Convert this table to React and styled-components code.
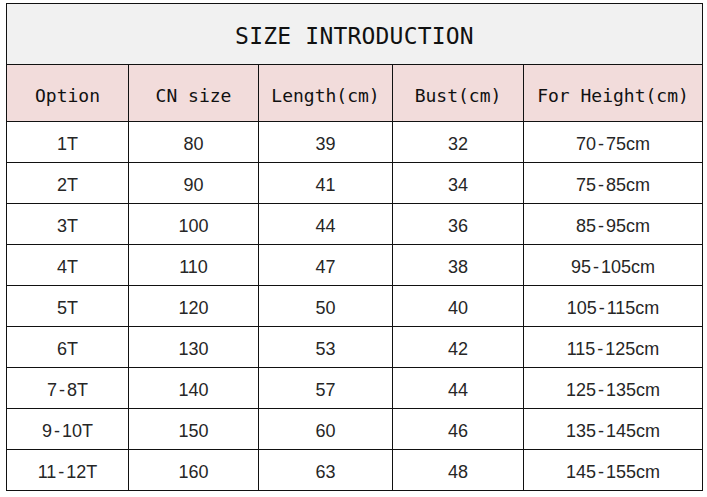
import React from "react";
import styled, { createGlobalStyle } from "styled-components";

const Global = createGlobalStyle`
  html, body { margin: 0; padding: 0; background: #ffffff; }
  body { font-family: "Liberation Sans", Arial, sans-serif; }
`;

const Page = styled.div`
  width: 707px;
  height: 497px;
  box-sizing: border-box;
  padding: 3px 0 0 6px;
  background: #ffffff;
`;

const Table = styled.div`
  display: grid;
  grid-template-columns: 122px 130px 134px 131px 179px;
  grid-template-rows: 61px 57px repeat(9, 41px);
  border-top: 1.5px solid #111;
  border-left: 1.5px solid #111;
  width: max-content;
`;

const Cell = styled.div`
  box-sizing: border-box;
  display: flex;
  align-items: center;
  justify-content: center;
  border-right: ${(p) => (p.$last ? "1.5px" : "1px")} solid #111;
  border-bottom: ${(p) => (p.$bottom ? "1.5px" : "1px")} solid #111;
  white-space: nowrap;
`;

const TitleCell = styled(Cell)`
  grid-column: 1 / -1;
  background: #f1f1f1;
  font-family: "DejaVu Sans Mono", "Liberation Mono", monospace;
  font-size: 23px;
  color: #111;
  padding-top: 4px;
  letter-spacing: 0.2px;
  border-right: 1.5px solid #111;
`;

const HeadCell = styled(Cell)`
  background: #f2dcdb;
  font-family: "DejaVu Sans Mono", "Liberation Mono", monospace;
  font-size: 18px;
  color: #111;
  padding-top: 4px;
`;

const DataCell = styled(Cell)`
  background: #ffffff;
  font-family: "Liberation Sans", Arial, sans-serif;
  font-size: 18px;
  color: #262626;
  padding-top: 5px;
`;

const Dash = styled.span`
  margin: 0 2px;
`;

const headers = ["Option", "CN size", "Length(cm)", "Bust(cm)", "For Height(cm)"];

const rows = [
  ["1T", "80", "39", "32", "70-75cm"],
  ["2T", "90", "41", "34", "75-85cm"],
  ["3T", "100", "44", "36", "85-95cm"],
  ["4T", "110", "47", "38", "95-105cm"],
  ["5T", "120", "50", "40", "105-115cm"],
  ["6T", "130", "53", "42", "115-125cm"],
  ["7-8T", "140", "57", "44", "125-135cm"],
  ["9-10T", "150", "60", "46", "135-145cm"],
  ["11-12T", "160", "63", "48", "145-155cm"],
];

const withDash = (v) => {
  const parts = v.split("-");
  if (parts.length === 1) return v;
  return (
    <>
      {parts[0]}
      <Dash>-</Dash>
      {parts[1]}
    </>
  );
};

export default function App() {
  return (
    <>
      <Global />
      <Page>
        <Table>
          <TitleCell>SIZE INTRODUCTION</TitleCell>
          {headers.map((h, i) => (
            <HeadCell key={h} $last={i === headers.length - 1}>
              {h}
            </HeadCell>
          ))}
          {rows.map((r, ri) =>
            r.map((v, ci) => (
              <DataCell
                key={`${ri}-${ci}`}
                $last={ci === r.length - 1}
                $bottom={ri === rows.length - 1}
              >
                {withDash(v)}
              </DataCell>
            ))
          )}
        </Table>
      </Page>
    </>
  );
}
